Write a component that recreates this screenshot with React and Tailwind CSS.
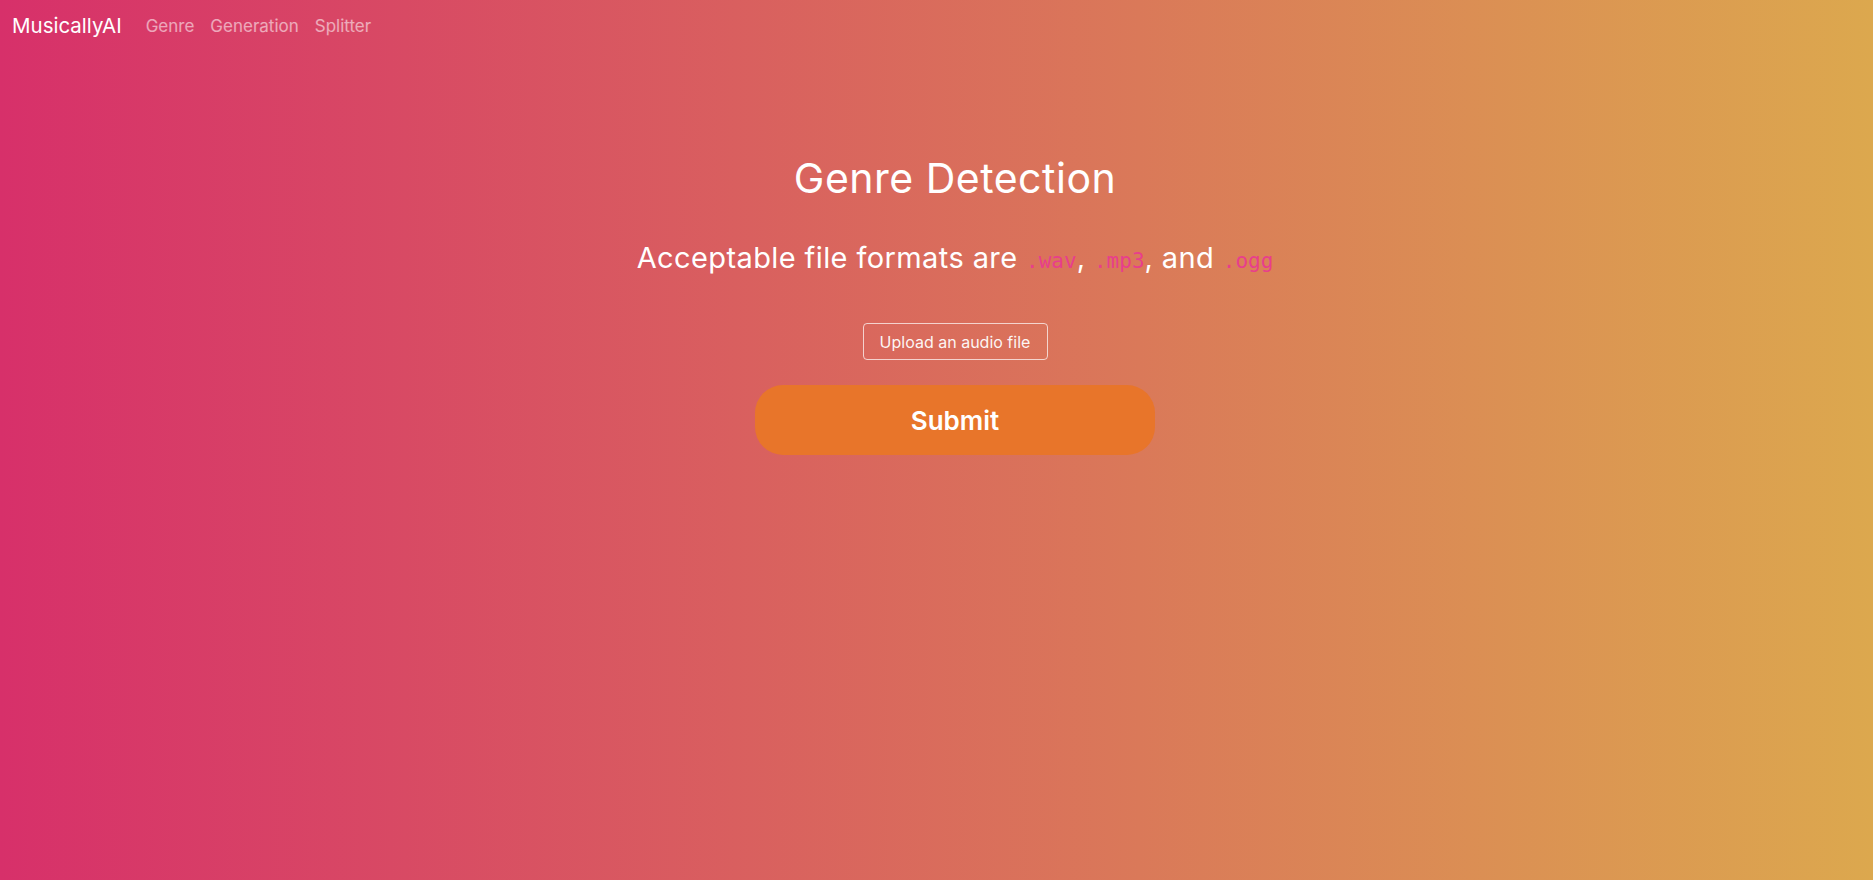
export default function App() {
  return (
    <div
      className="w-full h-[880px] bg-[linear-gradient(to_right,#d7306a,#dca84e)] text-white"
      style={{ fontFamily: "Inter, 'Noto Sans', sans-serif" }}
    >
      <nav className="flex items-center h-[52px] px-3">
        <span className="text-[20.5px] text-white mr-4 leading-none">MusicallyAI</span>
        <div className="flex items-center">
          <a className="px-2 text-[17px] text-white/55 leading-none">Genre</a>
          <a className="px-2 text-[17px] text-white/55 leading-none">Generation</a>
          <a className="px-2 text-[17px] text-white/55 leading-none">Splitter</a>
        </div>
      </nav>
      <main className="flex flex-col items-center pl-[37px]">
        <h1 className="mt-[101px] text-[41px] leading-[50px] font-normal tracking-[0.5px]">Genre Detection</h1>
        <p className="mt-[37px] text-[29px] leading-[35px] font-normal tracking-[0.4px]">
          Acceptable file formats are{" "}
          <code className="text-[21px] text-[#e83e8c] tracking-normal" style={{ fontFamily: "'DejaVu Sans Mono', monospace" }}>.wav</code>,{" "}
          <code className="text-[21px] text-[#e83e8c] tracking-normal" style={{ fontFamily: "'DejaVu Sans Mono', monospace" }}>.mp3</code>, and{" "}
          <code className="text-[21px] text-[#e83e8c] tracking-normal" style={{ fontFamily: "'DejaVu Sans Mono', monospace" }}>.ogg</code>
        </p>
        <button className="mt-[44px] h-[37px] w-[185px] rounded-[4px] border border-white/70 text-[16px] text-white/95">
          Upload an audio file
        </button>
        <button className="mt-[25px] h-[70px] w-[400px] rounded-[28px] bg-[#e8752a] text-[26px] font-semibold text-white">
          Submit
        </button>
      </main>
    </div>
  );
}
